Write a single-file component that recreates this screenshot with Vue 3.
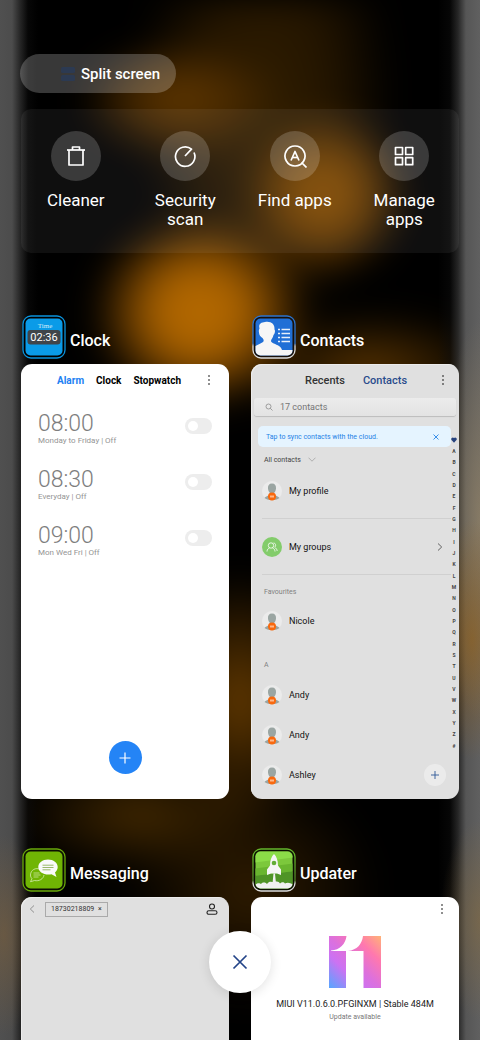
<template>
  <div class="recents">
    <div class="top">
      <button class="split" type="button">
        <svg viewBox="0 0 14 16" width="14" height="16" fill="#2c3a52">
          <rect x="0" y="1" width="14" height="6" rx="1.5"/>
          <rect x="0" y="9" width="14" height="6" rx="1.5"/>
        </svg>
        Split screen
      </button>

      <nav class="tools">
        <button v-for="tool in tools" :key="tool.label" class="tool" type="button">
          <span class="tool-icon">
            <svg viewBox="0 0 24 24" width="24" height="24" fill="none" stroke="#fff" stroke-width="1.7" stroke-linejoin="round">
              <path v-for="d in tool.paths" :key="d" :d="d"/>
            </svg>
          </span>
          <span class="tool-label">{{ tool.label }}</span>
        </button>
      </nav>
    </div>

    <main class="apps">
      <!-- Clock -->
      <section class="app">
        <header class="app-head">
          <svg class="app-icon" viewBox="0 0 44 44">
            <rect x="1" y="1" width="42" height="42" rx="8" fill="#000" stroke="#0a93dc" stroke-width="1.3"/>
            <rect x="3.5" y="3.5" width="37" height="37" rx="5" fill="#0a9be8"/>
            <text x="23" y="13" text-anchor="middle" font-family="Liberation Serif, serif" font-size="7" fill="#d4ecfa">Time</text>
            <rect x="5.5" y="15" width="33" height="14.5" rx="3" fill="#40454a"/>
            <text x="22" y="26" text-anchor="middle" font-family="Roboto, sans-serif" font-size="11" fill="#fff">02:36</text>
          </svg>
          <h2>Clock</h2>
        </header>
        <div class="card">
          <div class="bar">
            <div class="tabs clock-tabs">
              <button type="button" class="on">Alarm</button>
              <button type="button">Clock</button>
              <button type="button">Stopwatch</button>
            </div>
            <button class="more" type="button" aria-label="More">
              <svg viewBox="0 0 4 12" width="4" height="12"><circle v-for="y in [2, 6, 10]" :key="y" cx="2" :cy="y" r="0.8"/></svg>
            </button>
          </div>
          <ul class="alarms">
            <li v-for="(alarm, i) in alarms" :key="alarm.time">
              <label :for="'alarm' + i">
                <span class="time">{{ alarm.time }}</span>
                <span class="repeat">{{ alarm.repeat }} | Off</span>
              </label>
              <input :id="'alarm' + i" v-model="alarm.on" type="checkbox" class="switch">
            </li>
          </ul>
          <button class="add" type="button" aria-label="Add alarm">
            <svg viewBox="0 0 12 12" width="12" height="12" fill="none" stroke="#fff" stroke-width="1.2"><path d="M6 .5v11M.5 6h11"/></svg>
          </button>
        </div>
      </section>

      <!-- Contacts -->
      <section class="app">
        <header class="app-head">
          <svg class="app-icon" viewBox="0 0 44 44">
            <defs>
              <linearGradient id="ring" x1="0" y1="0" x2="0" y2="1">
                <stop offset="0.65" stop-color="#2b72cc"/>
                <stop offset="0.72" stop-color="#dcdcdc"/>
              </linearGradient>
            </defs>
            <rect x="1" y="1" width="42" height="42" rx="8" fill="#17100a" stroke="url(#ring)" stroke-width="1.3"/>
            <rect x="3.5" y="3.5" width="37" height="37" rx="5" fill="#206fd6"/>
            <path d="M3.5 31c2.500-1.500 5.500-2.500 7.500-4 1-1 1-2-.5-4-2-1-3.500-3-3.500-5.500-.5-2 0-3 .5-4C6 8 10 7.500 13 7c6-1 10 2 9.500 7.500 1 1 .5 4-1 5.500-.5 3-2.500 4-2.500 6 0 2 5 3 8 5 2 1.500 2.500 2.500 3 4h10.500v.5a5 5 0 0 1-5 5h-27a5 5 0 0 1-5-5z" fill="#f6f6f6"/>
            <path d="M26 14.500h2M29.500 14.500H38M26 18.500h2M29.500 18.500H38M26 22.500h2M29.500 22.500H38M26 26.500h2M29.500 26.500H38" stroke="#e8f0fa" stroke-width="1.5"/>
          </svg>
          <h2>Contacts</h2>
        </header>
        <div class="card grey">
          <div class="bar">
            <div class="tabs contact-tabs">
              <button type="button">Recents</button>
              <button type="button" class="on">Contacts</button>
            </div>
            <button class="more" type="button" aria-label="More">
              <svg viewBox="0 0 4 12" width="4" height="12"><circle v-for="y in [2, 6, 10]" :key="y" cx="2" :cy="y" r="0.8"/></svg>
            </button>
          </div>
          <div class="search">
            <svg viewBox="0 0 8 8" width="8" height="8" fill="none" stroke="#8a8a8a" stroke-width="0.8"><circle cx="3.5" cy="3.5" r="2.5"/><path d="M5.300 5.300L7.500 7.500"/></svg>
            <input type="search" placeholder="17 contacts" aria-label="Search contacts">
          </div>
          <div class="sync">
            <span>Tap to sync contacts with the cloud.</span>
            <button type="button" aria-label="Dismiss">
              <svg viewBox="0 0 6 6" width="6" height="6" fill="none" stroke="#2583e6" stroke-width="0.9"><path d="M.5 .5l5 5M5.500 .5l-5 5"/></svg>
            </button>
          </div>
          <button class="filter" type="button">
            All contacts
            <svg viewBox="0 0 8 5" width="8" height="5" fill="none" stroke="#999" stroke-width="0.7"><path d="M.5 .7L4 4.200L7.500 .7"/></svg>
          </button>

          <div class="person wide">
            <Avatar/>
            <span>My profile</span>
          </div>
          <div class="person wide">
            <svg class="avatar" viewBox="0 0 20 20" fill="none" stroke="#fff" stroke-width="0.8">
              <circle cx="10" cy="10" r="10" fill="#83cc6b" stroke="none"/>
              <circle cx="9" cy="8.5" r="2.7"/>
              <path d="M5 14.500c0-2 1.500-3.300 2.500-3.600M10.500 10.900c1.200 .5 2.500 1.600 2.500 3.600M11.500 6c2 0 3 2.500 1.200 4.300 1.300 .9 2.300 2 2.500 3.700"/>
            </svg>
            <span>My groups</span>
            <svg class="chevron" viewBox="0 0 6 8" width="6" height="8" fill="none" stroke="#555" stroke-width="0.9"><path d="M1 .5L4.700 4L1 7.500"/></svg>
          </div>
          <h3>Favourites</h3>
          <div class="person">
            <Avatar/>
            <span>Nicole</span>
          </div>
          <h3>A</h3>
          <div v-for="(name, i) in people" :key="i" class="person">
            <Avatar/>
            <span>{{ name }}</span>
            <button v-if="i === people.length - 1" class="add-contact" type="button" aria-label="Add contact">
              <svg viewBox="0 0 8 8" width="8" height="8" fill="none" stroke="#2c5796" stroke-width="0.9"><path d="M4 0v8M0 4h8"/></svg>
            </button>
          </div>

          <div class="index">
            <span><svg viewBox="0 0 6 6" width="6" height="6"><path d="M3 5.700L.5 3C-.5 1.500 1.500-.5 3 1 4.500-.5 6.500 1.500 5.500 3z" fill="#28437e"/></svg></span>
            <span v-for="letter in letters" :key="letter">{{ letter }}</span>
          </div>
        </div>
      </section>

      <!-- Messaging -->
      <section class="app">
        <header class="app-head">
          <svg class="app-icon" viewBox="0 0 44 44">
            <rect x="1" y="1" width="42" height="42" rx="8" fill="#0c0f02" stroke="#68a80a" stroke-width="1.3"/>
            <rect x="3.5" y="3.5" width="37" height="37" rx="5" fill="#70b504"/>
            <path d="M18 21.500c-4-2.500-9.500 .5-9.500 5.500 0 1.500 .5 2.700 1.500 3.700l-1.500 3 4-1.200c4.500 1 9-1.500 9.500-5.500" fill="none" stroke="#d7ebb4" stroke-width="0.8"/>
            <path d="M11.500 25h6M11.500 27h7M11.500 29h5" stroke="#d7ebb4" stroke-width="0.7"/>
            <path d="M26 11.500c5.500 0 9.700 3.300 9.700 7.500 0 2.300-1 4-2.700 5.500l1.500 4.500-5-2.700c-7.500 1.200-13.200-2.300-13.200-7.300 0-4.200 4.200-7.500 9.700-7.500z" fill="#fafafa"/>
            <path d="M20.500 17.200h11M20.500 19.500h11M20.500 21.800h8" stroke="#9bb86a" stroke-width="1"/>
          </svg>
          <h2>Messaging</h2>
        </header>
        <div class="card grey">
          <div class="compose">
            <button type="button" aria-label="Back">
              <svg viewBox="0 0 6 8" width="6" height="8" fill="none" stroke="#888" stroke-width="0.9"><path d="M5 .5L1.300 4L5 7.500"/></svg>
            </button>
            <button class="chip" type="button">18730218809 <span>×</span></button>
            <button class="pick" type="button" aria-label="Choose contact">
              <svg viewBox="0 0 12 12" width="12" height="12" fill="none" stroke="#222" stroke-width="1.1"><circle cx="6" cy="3.5" r="2.5"/><rect x="1" y="7.7" width="10" height="3.6" rx="1.8"/></svg>
            </button>
          </div>
        </div>
      </section>

      <!-- Updater -->
      <section class="app">
        <header class="app-head">
          <svg class="app-icon" viewBox="0 0 44 44">
            <defs>
              <linearGradient id="ring2" x1="0" y1="0" x2="0" y2="1">
                <stop offset="0.2" stop-color="#63b52b"/>
                <stop offset="0.75" stop-color="#4e7e28"/>
                <stop offset="0.82" stop-color="#dcdcdc"/>
              </linearGradient>
              <clipPath id="tile"><rect x="3.5" y="3.5" width="37" height="37" rx="5"/></clipPath>
            </defs>
            <rect x="1" y="1" width="42" height="42" rx="8" fill="#0c0f02" stroke="url(#ring2)" stroke-width="1.3"/>
            <g clip-path="url(#tile)">
              <path d="M0 0h44v44H0z" fill="#7cc83c"/>
              <path d="M0 0h44v9L0 15z" fill="#8bdc48"/>
              <path d="M0 21l44-6v8L0 28z" fill="#69b52f"/>
              <path d="M0 28l44-5v20H0z" fill="#4f9426"/>
              <path d="M22 6c2.500 2.500 4 6 4 11.500l3 4V27l-4-1.500h-6L15 27v-5.500l3-4C18 12 19.500 8.500 22 6z" fill="#f5f5f5"/>
              <circle cx="22" cy="15" r="2.3" fill="#62ac35"/>
              <path d="M21.500 25.500h1.500l1 10h-3.500zM3 37c2-2.500 5-2 6-1 2-2.500 5-1.500 6 0 2-3 5-2.500 7-1 2-2.500 5-1.500 6 .5 2-2 4-1.500 5 0 3-1.500 5-.5 8 1v6H3z" fill="#f0f0f0"/>
            </g>
          </svg>
          <h2>Updater</h2>
        </header>
        <div class="card">
          <div class="bar short">
            <button class="more" type="button" aria-label="More">
              <svg viewBox="0 0 4 12" width="4" height="12"><circle v-for="y in [2, 6, 10]" :key="y" cx="2" :cy="y" r="0.8"/></svg>
            </button>
          </div>
          <div class="update">
            <svg viewBox="0 0 52 52" width="52" height="52">
              <defs>
                <linearGradient id="miui" x1="0" y1="1" x2="1" y2="0">
                  <stop offset="0" stop-color="#55a6ff"/>
                  <stop offset="0.32" stop-color="#cc72f2"/>
                  <stop offset="0.5" stop-color="#dc70dd"/>
                  <stop offset="0.75" stop-color="#ff78ae"/>
                  <stop offset="1" stop-color="#ffb377"/>
                </linearGradient>
              </defs>
              <path d="M0 0h17.500C16.500 8 11 14 2 14.500V15h15v37H0zM34 0h18v52H34.500V15H19C28 14 33 8 34 0z" fill="url(#miui)"/>
            </svg>
            <p class="version">MIUI V11.0.6.0.PFGINXM | Stable 484M</p>
            <p class="status">Update available</p>
          </div>
        </div>
      </section>
    </main>

    <button class="close" type="button" aria-label="Close all">
      <svg viewBox="0 0 16 16" width="16" height="16" fill="none" stroke="#234488" stroke-width="1.7"><path d="M1.500 1.500l13 13M14.500 1.500l-13 13"/></svg>
    </button>
  </div>
</template>

<script setup>
import { h, ref } from 'vue'

const tools = [
  { label: 'Cleaner', paths: ['M3 6h18', 'M8.500 6V3h7v3', 'M5 6v15h14V6'] },
  { label: 'Security scan', paths: ['M21 8.500A9.700 9.700 0 1 1 18.500 5.200L12 12'] },
  { label: 'Find apps', paths: ['M12 2a10 10 0 1 0 .01 0', 'M18.500 18.500L23.500 23.500', 'M8 16.500L12 7.500L16 16.500', 'M9.500 13.500h5'] },
  { label: 'Manage apps', paths: ['M3.500 3.500h7v7h-7z', 'M13.700 3.500h7v7h-7z', 'M3.500 13.700h7v7h-7z', 'M13.700 13.700h7v7h-7z'] }
]

const alarms = ref([
  { time: '08:00', repeat: 'Monday to Friday', on: false },
  { time: '08:30', repeat: 'Everyday', on: false },
  { time: '09:00', repeat: 'Mon Wed Fri', on: false }
])

const people = ['Andy', 'Andy', 'Ashley']
const letters = 'ABCDEFGHIJKLMNOPQRSTUVWXYZ#'.split('')

// Default silhouette with the account badge
const Avatar = () => h('svg', { viewBox: '0 0 20 20', width: 20, height: 20 }, [
  h('circle', { cx: 10, cy: 10, r: 10, fill: '#ebebeb' }),
  h('path', { d: 'M10 2.500c3 0 4.300 2 4 5-.2 2-1 3.500-2 4.500v2c2 .8 4.500 1.300 5.500 3-4 3-11 3-15 0 1-1.700 3.500-2.200 5.500-3v-2c-1-1-1.800-2.500-2-4.500-.3-3 1-5 4-5z', fill: '#9aa5a2' }),
  h('circle', { cx: 10, cy: 15.5, r: 4, fill: '#f9690e' }),
  h('path', { d: 'M8 14.500h4v2H8z', fill: '#ffb98a' })
])
</script>

<style>
body { margin: 0; background: #000; }
</style>

<style scoped>
.recents {
  position: relative; isolation: isolate;
  height: 100vh; box-sizing: border-box;
  padding: 54px 21px 0;
  overflow: hidden;
  font-family: Roboto, sans-serif;
  background: #000;
}

/* Blurred wallpaper */
.recents::before {
  content: ''; position: absolute; inset: 0; z-index: -1;
  filter: blur(16px);
  background:
    radial-gradient(110px 100px at 200px 312px, #b86b00, #a66000 40%, rgba(140, 80, 0, 0.7) 65%, transparent),
    radial-gradient(85px 85px at 325px 195px, #8a4e00, rgba(130, 74, 0, 0.8) 45%, transparent),
    radial-gradient(100px 60px at 178px 100px, #603700, rgba(90, 51, 0, 0.7) 50%, transparent),
    radial-gradient(130px 240px at 265px 100px, #301d00, rgba(44, 26, 0, 0.8) 50%, transparent),
    radial-gradient(130px 60px at 370px 370px, #583300, transparent),
    radial-gradient(80px 130px at 240px 700px, #663b00, transparent),
    radial-gradient(130px 60px at 140px 815px, #442900, transparent),
    radial-gradient(130px 120px at 250px 890px, #301c00, transparent);
}
/* Lit edges of the screen */
.recents::after {
  content: ''; position: absolute; inset: 0; z-index: -1;
  background:
    radial-gradient(40px 120px at 472px 640px, rgba(150, 96, 20, 0.6), transparent),
    radial-gradient(40px 200px at 480px 520px, rgba(160, 140, 105, 0.6), transparent),
    radial-gradient(40px 100px at 480px 920px, rgba(140, 110, 60, 0.5), transparent),
    radial-gradient(34px 100px at 4px 935px, rgba(130, 98, 56, 0.5), transparent),
    linear-gradient(90deg, #505050 0, #4c4c4c 12px, rgba(48, 48, 48, 0.8) 20px, rgba(16, 16, 16, 0.4) 28px, transparent 38px),
    linear-gradient(270deg, #606060 0, #565656 14px, rgba(48, 48, 48, 0.8) 22px, rgba(16, 16, 16, 0.4) 30px, transparent 42px);
}

button {
  border: 0; padding: 0; margin: 0;
  background: none; color: inherit; font: inherit;
  cursor: pointer;
}
svg { display: block; flex: none; }

/* Top actions */
.split {
  display: flex; align-items: center; gap: 6px;
  height: 39px; margin-left: -1px; padding: 0 16px 0 41px;
  border-radius: 20px;
  background: rgba(255, 255, 255, 0.22);
  color: #fff; font-size: 15px; font-weight: 500;
}
.tools {
  display: grid; grid-template-columns: repeat(4, 1fr);
  margin-top: 16px; padding: 22px 0 24px;
  border-radius: 10px;
  background: rgba(255, 255, 255, 0.06);
}
.tool {
  display: flex; flex-direction: column; align-items: center; gap: 10px;
  color: #fff;
}
.tool-icon {
  display: flex; align-items: center; justify-content: center;
  width: 50px; height: 50px; border-radius: 50%;
  background: rgba(255, 255, 255, 0.18);
}
.tool-label { max-width: 80px; font-size: 17px; line-height: 19px; }

/* Recent apps */
.apps {
  display: grid; grid-template-columns: 1fr 1fr;
  gap: 49px 22px; margin-top: 62px;
}
.app { min-width: 0; }
.app-head { display: flex; align-items: center; gap: 4px; padding-left: 1px; }
.app-icon { width: 44px; height: 44px; }
h2 {
  margin: 8px 0 0;
  color: #fff; font-size: 16px; font-weight: 500; line-height: 20px;
}
.card {
  position: relative;
  display: flex; flex-direction: column;
  margin-top: 5px; box-sizing: border-box;
  aspect-ratio: 208 / 435;
  border-radius: 11px; overflow: hidden;
  background: #fff; color: #111;
}
.grey { background: #e0e0e0; box-shadow: inset 1px 1px 0 #ececec; }

.bar {
  display: flex; align-items: center;
  flex: none; height: 32px; padding: 0 18px 0 36px;
}
.tabs { display: flex; }
.clock-tabs { gap: 12px; font-size: 10px; font-weight: 700; color: #000; }
.clock-tabs .on { color: #2180f3; }
.contact-tabs { gap: 18px; padding-left: 18px; font-size: 11px; font-weight: 500; color: #333; }
.contact-tabs .on { color: #2a4c8c; }
.grey .bar { padding-right: 14px; }
.short { height: 24px; padding-right: 15px; }
.more { margin-left: auto; }

/* Alarms */
.alarms { list-style: none; margin: 0; padding: 2px 0 0; }
.alarms li {
  display: flex; align-items: flex-start; justify-content: space-between;
  height: 56px; box-sizing: border-box; padding: 14px 17px 0;
  color: #7e7e7e;
}
.time, .repeat { display: block; }
.time { font-size: 23px; font-weight: 300; line-height: 24px; }
.repeat { font-size: 8px; line-height: 10px; color: #949494; }
.switch {
  appearance: none;
  width: 27px; height: 16px; margin: 6px 0 0; padding: 3px;
  box-sizing: border-box; border-radius: 8px;
  background: #ededed;
}
.switch::before {
  content: ''; display: block;
  width: 10px; height: 10px; border-radius: 50%;
  background: #fff;
}
.switch:checked { background: #2180f3; }
.switch:checked::before { margin-left: auto; }
.add {
  display: flex; align-items: center; justify-content: center;
  width: 33px; height: 33px; border-radius: 50%;
  margin: auto auto 25px;
  background: #2484f6;
}

/* Contacts */
.search {
  display: flex; align-items: center; gap: 7px;
  height: 18px; margin: 2px 3px 0; padding-left: 11px;
  border-radius: 3px;
  background: linear-gradient(#ececec, #e3e3e3);
  box-shadow: 0 1px 1px #bcbcbc;
}
.search input {
  flex: 1; min-width: 0; border: 0; padding: 0;
  background: none; outline: none;
  font: 9px Roboto, sans-serif; color: #333;
}
.search input::placeholder { color: #757575; }
.sync {
  display: flex; align-items: center; justify-content: space-between;
  height: 21px; margin: 10px 8px 0 7px; padding: 0 12px 0 8px;
  border-radius: 5px;
  background: #e5f4ff; color: #2583e6; font-size: 7px;
}
.filter {
  display: flex; align-items: center; gap: 7px;
  height: 15px; margin: 5px 0 0 13px;
  color: #444; font-size: 7px;
}
.person {
  display: flex; align-items: center; gap: 7px;
  height: 40px; padding: 0 13px 0 11px;
  font-size: 9px;
}
.wide {
  height: 56px; margin: 0 8px 0 11px; padding: 0 8px 0 0;
  box-sizing: border-box;
  border-bottom: 1px solid #d0d0d0;
}
.filter + .wide { margin-top: -4px; }
.avatar { width: 20px; height: 20px; }
.chevron { margin-left: auto; }
h3 {
  margin: 0 0 0 13px; padding: 11px 0 3px;
  color: #808080; font-size: 7px; font-weight: 400; line-height: 12px;
}
.person:not(.wide) + h3 { padding: 18px 0 4px; }
.add-contact {
  display: flex; align-items: center; justify-content: center;
  width: 22px; height: 22px; border-radius: 50%;
  margin-left: auto;
  background: #ebebeb;
}
.index {
  position: absolute; top: 70px; right: 1px; bottom: 48px;
  display: flex; flex-direction: column;
  width: 8px;
  color: #444; font-size: 5px; font-weight: 700;
}
.index span { flex: 1; display: flex; align-items: center; justify-content: center; }

/* Messaging */
.compose {
  display: flex; align-items: center;
  height: 24px; padding: 0 11px 0 8px;
}
.chip {
  height: 15px; margin-left: 10px; padding: 0 5px;
  border: 1px solid #aaa; box-sizing: border-box;
  color: #333; font-size: 7px;
}
.chip span { margin-left: 2px; }
.pick { margin-left: auto; }

/* Updater */
.update {
  display: flex; flex-direction: column; align-items: center;
  padding-top: 15px;
}
.update p { margin: 0; white-space: nowrap; }
.version { padding-top: 9px; font-size: 9px; line-height: 14px; color: #222; }
.status { font-size: 7px; line-height: 12px; color: #777; }

.close {
  position: absolute; left: 50%; bottom: 47px;
  display: flex; align-items: center; justify-content: center;
  width: 62px; height: 62px; margin-left: -31px;
  border-radius: 50%;
  background: #fff;
  box-shadow: 0 2px 12px rgba(0, 0, 0, 0.12);
}
</style>
